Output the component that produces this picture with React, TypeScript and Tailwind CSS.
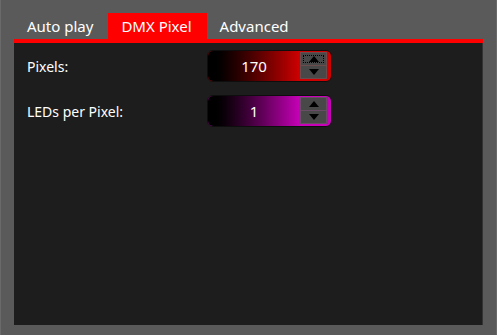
import React from "react";

type SpinnerProps = {
  value: string;
  grad: string;
  end: string;
  edge: string;
  focused?: boolean;
};

const Spinner = ({ value, grad, end, edge, focused }: SpinnerProps) => {
  return (
    <div
      className={`flex h-[32px] w-[125px] items-stretch overflow-hidden rounded-[6px] border border-[#0e0e0e] ${end}`}
    >
      <div className={`flex flex-1 items-center justify-center text-[15px] text-white ${grad}`}>
        {value}
      </div>
      <div className="flex w-[31px] flex-col pb-[2px] pr-[4px] pt-[1px]">
        <button
          type="button"
          className={`relative flex flex-1 items-center justify-center border ${edge} bg-[#484848]`}
        >
          {focused && (
            <span className="pointer-events-none absolute inset-[2px] border border-dotted border-black" />
          )}
          <svg viewBox="0 0 10 6" className="h-[6px] w-[10px]" aria-hidden>
            <path d="M0 6 L5 0 L10 6 Z" fill="#000" />
          </svg>
        </button>
        <button
          type="button"
          className={`flex flex-1 items-center justify-center border border-t-0 ${edge} bg-[#484848]`}
        >
          <svg viewBox="0 0 10 6" className="h-[6px] w-[10px]" aria-hidden>
            <path d="M0 0 L10 0 L5 6 Z" fill="#000" />
          </svg>
        </button>
      </div>
    </div>
  );
};

const App = () => {
  const tabs = ["Auto play", "DMX Pixel", "Advanced"];
  return (
    <div
      className="flex h-[335px] w-[497px] flex-col border-x border-[#6a6a6a] bg-[#5a5a5a] px-[13px] pb-[10px] pt-[13px]"
      style={{ fontFamily: '"Noto Sans", "Open Sans", sans-serif' }}
    >
      {/* Tab strip */}
      <div className="flex h-[26px]">
        {tabs.map((t) => (
          <div
            key={t}
            className={`flex items-center pl-[13px] pr-[15px] text-[15px] text-white ${
              t === "DMX Pixel" ? "bg-[#ff0000]" : ""
            }`}
          >
            {t}
          </div>
        ))}
      </div>
      <div className="h-[4px] bg-[#ff0000]" />

      {/* Panel */}
      <div className="flex flex-1 flex-col gap-[13px] border-r border-[#333] bg-[#1d1d1d] px-[13px] pt-[7px]">
        <div className="flex items-center">
          <div className="w-[180px] text-[14px] text-white">Pixels:</div>
          <Spinner
            value="170"
            grad="bg-gradient-to-r from-[#000000] to-[#d00000]"
            end="bg-[#d00000]"
            edge="border-[#6a4c4c]"
            focused
          />
        </div>
        <div className="flex items-center">
          <div className="w-[180px] text-[14px] text-white">LEDs per Pixel:</div>
          <Spinner
            value="1"
            grad="bg-gradient-to-r from-[#000000] to-[#c800b8]"
            end="bg-[#c800b8]"
            edge="border-[#6a4c66]"
          />
        </div>
      </div>
    </div>
  );
};

export default App;
